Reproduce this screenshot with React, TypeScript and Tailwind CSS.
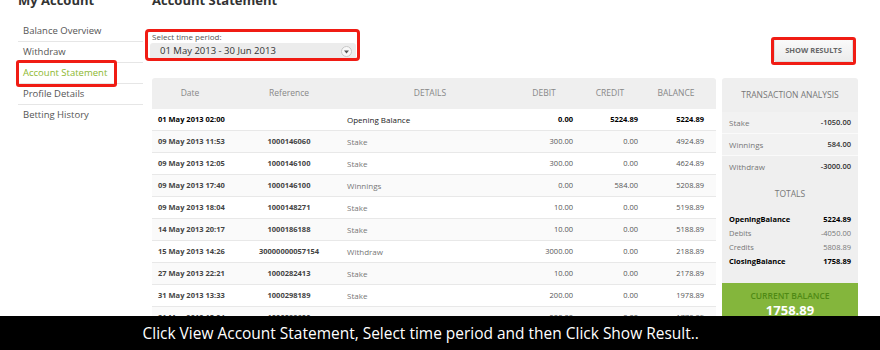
import React from "react";

const rows = [
  ["01 May 2013 02:00", "", "Opening Balance", "0.00", "5224.89", "5224.89", true],
  ["09 May 2013 11:53", "1000146060", "Stake", "300.00", "0.00", "4924.89", false],
  ["09 May 2013 12:05", "1000146100", "Stake", "300.00", "0.00", "4624.89", false],
  ["09 May 2013 17:40", "1000146100", "Winnings", "0.00", "584.00", "5208.89", false],
  ["09 May 2013 18:04", "1000148271", "Stake", "10.00", "0.00", "5198.89", false],
  ["14 May 2013 20:17", "1000186188", "Stake", "10.00", "0.00", "5188.89", false],
  ["15 May 2013 14:26", "30000000057154", "Withdraw", "3000.00", "0.00", "2188.89", false],
  ["27 May 2013 22:21", "1000282413", "Stake", "10.00", "0.00", "2178.89", false],
  ["31 May 2013 13:33", "1000298189", "Stake", "200.00", "0.00", "1978.89", false],
  ["31 May 2013 15:24", "1000298600", "Stake", "200.00", "0.00", "1778.89", false],
] as const;

const grid = "grid grid-cols-[76px_112px_180px_68px_64px_64px]";

export default function App() {
  return (
    <div
      className="relative h-[350px] w-[880px] overflow-hidden bg-white"
      style={{ fontFamily: '"Open Sans", sans-serif' }}
    >
      <div className="flex">
        {/* Sidebar */}
        <div className="ml-[18px] w-[125px] shrink-0">
          <div className="-mt-[9px] text-[13px] font-bold leading-[18px] text-[#333]">My Account</div>
          <div className="mt-[12px] flex flex-col text-[9.5px] text-[#555]">
            <div className="flex h-[21px] items-center border-b border-[#e6e6e6] pl-[5px]">Balance Overview</div>
            <div className="flex h-[21px] items-center border-b border-[#e6e6e6] pl-[5px]">Withdraw</div>
            <div className="relative flex h-[21px] items-center border-b border-[#e6e6e6] pl-[5px] text-[#8cb72f]">
              Account Statement
              <div className="absolute -left-[2px] -top-[3px] h-[27px] w-[101px] rounded-[3px] border-[3px] border-[#f01c14]" />
            </div>
            <div className="flex h-[21px] items-center border-b border-[#e6e6e6] pl-[5px]">Profile Details</div>
            <div className="flex h-[21px] items-center pl-[5px]">Betting History</div>
          </div>
        </div>

        {/* Main */}
        <div className="ml-[9px] w-[706px] shrink-0">
          <div className="-mt-[9px] text-[13px] font-bold leading-[18px] text-[#333]">Account Statement</div>
          <div className="mt-[23px] flex items-start justify-between">
            <div className="relative w-[206px] pl-0">
              <div className="text-[8px] leading-[10px] text-[#555]">Select time period:</div>
              <div className="mt-[1px] -ml-[2px] flex h-[17px] w-[206px] items-center justify-between rounded-[3px] bg-[#ececec] pl-[10px] pr-[4px] text-[9.5px] text-[#333]">
                <span>01 May 2013 - 30 Jun 2013</span>
                <span className="flex h-[11px] w-[11px] items-center justify-center rounded-full border border-[#c8c8c8] bg-[#f8f8f8]">
                  <svg width="5" height="4" viewBox="0 0 5 4"><path d="M0 0.5 L5 0.5 L2.5 3.5 Z" fill="#555" /></svg>
                </span>
              </div>
              <div className="absolute -left-[7px] -top-[3px] h-[32px] w-[215px] rounded-[4px] border-[3px] border-[#f01c14]" />
            </div>
            <div className="relative mt-[7px] mr-[5px]">
              <div className="flex h-[23px] w-[79px] items-center justify-center rounded-[2px] border border-[#dcdcdc] bg-gradient-to-b from-[#fafafa] to-[#ececec] text-[7.5px] font-bold text-[#666]">
                SHOW RESULTS
              </div>
              <div className="absolute -left-[3px] -top-[2px] h-[28px] w-[85px] rounded-[3px] border-[3px] border-[#f01c14]" />
            </div>
          </div>

          <div className="mt-[16px] flex gap-[6px]">
            {/* Table */}
            <div className="w-[564px]">
              <div className={`${grid} h-[31px] items-center rounded-t-[3px] bg-[#efefef] text-[8.5px] text-[#888]`}>
                <div className="text-center">Date</div>
                <div className="pl-[10px] text-center">Reference</div>
                <div className="text-center">DETAILS</div>
                <div className="pr-[20px] text-center">DEBIT</div>
                <div className="pr-[20px] text-center">CREDIT</div>
                <div className="pr-[16px] text-center">BALANCE</div>
              </div>
              {rows.map((r, i) => (
                <div
                  key={i}
                  className={`${grid} h-[22px] items-center border-b border-[#e8e8e8] text-[7.5px] ${
                    i % 2 === 1 ? "bg-[#fafafa]" : "bg-white"
                  } ${r[6] ? "text-black" : "text-[#555]"}`}
                >
                  <div className={`pl-[6px] font-bold ${r[6] ? "text-black" : "text-[#444]"}`}>{r[0]}</div>
                  <div className="pl-[10px] text-center font-bold text-[#444]">{r[1]}</div>
                  <div className={`pl-[7px] text-[8px] ${r[6] ? "text-[#222]" : "text-[#777]"}`}>{r[2]}</div>
                  <div className={`pr-[15px] text-right ${r[6] ? "font-bold" : ""}`}>{r[3]}</div>
                  <div className={`pr-[14px] text-right ${r[6] ? "font-bold" : ""}`}>{r[4]}</div>
                  <div className={`pr-[12px] text-right ${r[6] ? "font-bold" : ""}`}>{r[5]}</div>
                </div>
              ))}
            </div>

            {/* Right panel */}
            <div className="w-[136px] rounded-t-[3px] bg-[#efefef]">
              <div className="flex h-[34px] items-center justify-center text-[8.5px] text-[#777]">TRANSACTION ANALYSIS</div>
              <div className="flex flex-col text-[7.5px]">
                <div className="flex h-[22px] items-center justify-between border-b border-[#fafafa] bg-[#f2f2f2] px-[7px]">
                  <span className="text-[8px] text-[#777]">Stake</span>
                  <span className="font-semibold text-[#333]">-1050.00</span>
                </div>
                <div className="flex h-[22px] items-center justify-between border-b border-[#fafafa] bg-[#f2f2f2] px-[7px]">
                  <span className="text-[8px] text-[#777]">Winnings</span>
                  <span className="font-semibold text-[#333]">584.00</span>
                </div>
                <div className="flex h-[22px] items-center justify-between px-[7px]">
                  <span className="text-[8px] text-[#777]">Withdraw</span>
                  <span className="font-semibold text-[#333]">-3000.00</span>
                </div>
              </div>
              <div className="flex h-[32px] items-center justify-center text-[8.5px] text-[#777]">TOTALS</div>
              <div className="mt-[3px] flex flex-col px-[7px] text-[7.5px]">
                <div className="flex h-[14px] items-center justify-between font-bold text-black">
                  <span>OpeningBalance</span><span>5224.89</span>
                </div>
                <div className="flex h-[14px] items-center justify-between text-[#777]">
                  <span>Debits</span><span>-4050.00</span>
                </div>
                <div className="flex h-[14px] items-center justify-between text-[#777]">
                  <span>Credits</span><span>5808.89</span>
                </div>
                <div className="flex h-[14px] items-center justify-between font-bold text-black">
                  <span>ClosingBalance</span><span>1758.89</span>
                </div>
              </div>
              <div className="mt-[14px] flex h-[60px] flex-col items-center bg-[#84b63c] pt-[7px]">
                <div className="text-[8.5px] font-semibold leading-[12px] text-[#4f8a14]">CURRENT BALANCE</div>
                <div className="text-[13px] font-bold leading-[16px] text-white">1758.89</div>
              </div>
            </div>
          </div>
        </div>
      </div>

      <div className="absolute bottom-0 left-0 flex h-[34px] w-full items-center justify-center bg-black pr-[38px]">
        <span className="inline-block scale-x-[0.91] text-[17px] text-white">
          Click View Account Statement, Select time period and then Click Show Result..
        </span>
      </div>
    </div>
  );
}
